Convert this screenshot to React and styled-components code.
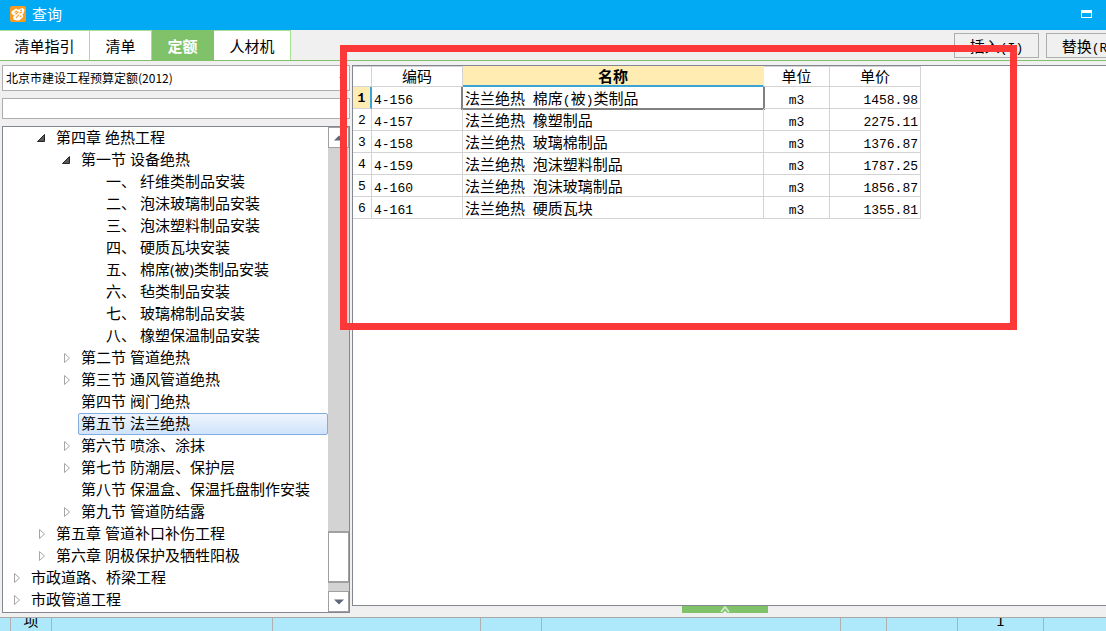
import React, { useState } from 'react';
import styled, { createGlobalStyle, css } from 'styled-components';

const GlobalStyle = createGlobalStyle`
* {
  box-sizing: border-box;
}
body {
  margin: 0;
  overflow: hidden;
  background: #f0f0f0;
}
button, input, select {
  margin: 0;
  padding: 0;
  font: inherit;
  color: inherit;
  border-radius: 0;
}
`
const Window = styled.div`
display: flex;
flex-direction: column;
height: 100vh;
overflow: hidden;
color: #000;
font-family: 'Noto Sans CJK SC', sans-serif;
font-size: 15px;
line-height: 22px;
`
const TitleBar = styled.header`
display: flex;
align-items: center;
gap: 6px;
height: 30px;
padding: 0 14px 2px 10px;
background: #02a9f3;
color: #fff;
`
const Title = styled.h1`
flex: 1;
margin: 0;
font-size: 15px;
font-weight: 400;
`
const MinimizeButton = styled.button`
width: 11px;
height: 8px;
border: 1px solid #fff;
border-top-width: 3px;
background: none;
`
const TopBar = styled.div`
display: flex;
justify-content: space-between;
height: 31px;
overflow: hidden;
border-bottom: 1px solid #7fc269;
`
const Tabs = styled.nav`
display: flex;
`
const Tab = styled.button`
width: ${(props) => props.$width}px;
border: 0 solid #a9df92;
border-width: 1px 1px 0 0;
background: #fff;
line-height: 28px;
${(props) => props.$active && css`
  border-color: #7fc269;
  background: #7fc269;
  color: #fff;
  font-weight: 700;
`}
`
const Actions = styled.div`
display: flex;
gap: 7px;
padding-top: 3px;
margin-right: -25px;
`
const ActionButton = styled.button`
width: 85px;
height: 25px;
border: 1px solid #adadad;
background: #f0f0f0;
`
const Latin = styled.span`
font-family: 'Liberation Mono', monospace;
font-size: 13px;
line-height: 1;
white-space: pre;
`
const Body = styled.main`
display: flex;
flex: 1;
gap: 2px;
min-height: 0;
padding: 4px 0 4px 2px;
`
const SidePanel = styled.aside`
display: flex;
flex-direction: column;
flex: 0 0 348px;
gap: 7px;
`
const SelectBox = styled.div`
display: flex;
align-items: center;
height: 26px;
padding-right: 4px;
border: 1px solid #adadad;
background: #fff;
`
const Select = styled.select`
flex: 1;
height: 24px;
padding-left: 3px;
border: 0;
appearance: none;
background: none;
font-size: 12px;
outline: none;
`
const SearchInput = styled.input`
height: 21px;
padding: 0 3px;
border: 1px solid #adadad;
background: #fff;
font-size: 12px;
outline: none;
`
const TreeBox = styled.div`
display: flex;
flex: 1;
min-height: 0;
border: 1px solid #828790;
background: #fff;
`
const Tree = styled.ul`
flex: 1;
margin: 0;
padding: 0;
overflow: hidden;
list-style: none;
font-family: 'Noto Sans', 'Noto Sans CJK SC', sans-serif;
`
const TreeRow = styled.li`
display: flex;
height: 22px;
padding-left: ${(props) => props.$level * 25}px;
`
const Toggle = styled.span`
display: flex;
flex: 0 0 25px;
align-items: center;
justify-content: center;
padding-left: 2px;
`
const TreeLabel = styled.span`
flex: 1;
padding: 0 2px;
border: 1px solid transparent;
border-radius: 2px;
line-height: 18px;
white-space: nowrap;
${(props) => props.$selected && css`
  border-color: #84acdd;
  background: linear-gradient(#eff5fd, #cfe3fb);
`}
`
const ScrollBar = styled.div`
display: flex;
flex-direction: column;
flex: 0 0 21px;
background: #d3d3d3;
`
const ScrollButton = styled.button`
display: flex;
align-items: center;
justify-content: center;
height: 21px;
border: 1px solid #a0a0a0;
background: #fff;
`
const ScrollTrack = styled.div`
display: flex;
flex: 1;
flex-direction: column;
justify-content: flex-end;
padding-bottom: 8px;
`
const ScrollThumb = styled.div`
height: 52px;
border: 1px solid #a0a0a0;
border-width: 2px 1px;
background: #fff;
`
const MainPanel = styled.section`
display: flex;
flex: 1;
flex-direction: column;
min-width: 0;
`
const GridBox = styled.div`
flex: 1;
min-height: 0;
border: 1px solid #828790;
border-right: 0;
background: #fff;
`
const Grid = styled.table`
width: 568px;
table-layout: fixed;
border-collapse: separate;
border-spacing: 0;
`
const Col = styled.col`
width: ${(props) => props.$width}px;
`
const HeadCell = styled.th`
height: 21px;
padding: 0 0 2px;
border: 1px solid #d3d3d3;
border-left: 0;
font-weight: 400;
line-height: 16px;
${(props) => props.$active && css`
  padding-bottom: 1px;
  border-color: #ffecb3;
  border-bottom: 2px solid #39a5d6;
  background: #ffecb3;
  font-weight: 700;
`}
`
const RowNumber = styled.th`
height: 22px;
padding: 2px 0 0;
border: 0 solid #d3d3d3;
border-width: 0 1px 1px 0;
font-family: 'Liberation Mono', monospace;
font-size: 13px;
font-weight: 400;
line-height: 18px;
${(props) => props.$active && css`
  border-right: 2px solid #39a5d6;
  background: #ffecb3;
  font-weight: 700;
`}
`
const Cell = styled.td`
position: relative;
height: 22px;
padding: 0 2px;
border: 0 solid #d3d3d3;
border-width: 0 1px 1px 0;
line-height: 20px;
text-align: ${(props) => props.$align || 'left'};
white-space: nowrap;
${(props) => props.$focused && css`
  &::after {
    content: '';
    position: absolute;
    inset: 0 -2px -2px -2px;
    border: 2px solid #808080;
    border-top: 0;
  }
`}
`
const HandleRow = styled.div`
display: flex;
justify-content: center;
padding-right: 8px;
`
const Handle = styled.button`
display: flex;
justify-content: center;
width: 86px;
height: 7px;
overflow: hidden;
border: 0;
background: #7fc269;
`
const Footer = styled.footer`
display: flex;
height: 14px;
border-top: 1px solid #a8a8a8;
background: #ade8fb;
`
const FooterCell = styled.div`
display: flex;
flex: 0 0 ${(props) => props.$width}px;
align-items: flex-end;
justify-content: center;
overflow: hidden;
border-right: 1px solid #b0b0b0;
`
const Annotation = styled.div`
position: absolute;
top: 45px;
left: 340px;
width: 677px;
height: 285px;
border: 7px solid #fd3838;
pointer-events: none;
`

const tabs = [
  { name: '清单指引', width: 90 },
  { name: '清单', width: 62 },
  { name: '定额', width: 62 },
  { name: '人材机', width: 77 },
];

const tree = [
  { level: 1, state: 'open', name: '第四章 绝热工程' },
  { level: 2, state: 'open', name: '第一节 设备绝热' },
  { level: 3, name: '一、 纤维类制品安装' },
  { level: 3, name: '二、 泡沫玻璃制品安装' },
  { level: 3, name: '三、 泡沫塑料制品安装' },
  { level: 3, name: '四、 硬质瓦块安装' },
  { level: 3, name: '五、 棉席(被)类制品安装' },
  { level: 3, name: '六、 毡类制品安装' },
  { level: 3, name: '七、 玻璃棉制品安装' },
  { level: 3, name: '八、 橡塑保温制品安装' },
  { level: 2, state: 'closed', name: '第二节 管道绝热' },
  { level: 2, state: 'closed', name: '第三节 通风管道绝热' },
  { level: 2, name: '第四节 阀门绝热' },
  { level: 2, name: '第五节 法兰绝热' },
  { level: 2, state: 'closed', name: '第六节 喷涂、涂抹' },
  { level: 2, state: 'closed', name: '第七节 防潮层、保护层' },
  { level: 2, name: '第八节 保温盒、保温托盘制作安装' },
  { level: 2, state: 'closed', name: '第九节 管道防结露' },
  { level: 1, state: 'closed', name: '第五章 管道补口补伤工程' },
  { level: 1, state: 'closed', name: '第六章 阴极保护及牺牲阳极' },
  { level: 0, state: 'closed', name: '市政道路、桥梁工程' },
  { level: 0, state: 'closed', name: '市政管道工程' },
];

const rows = [
  { code: '4-156', name: '法兰绝热 棉席(被)类制品', unit: 'm3', price: '1458.98' },
  { code: '4-157', name: '法兰绝热 橡塑制品', unit: 'm3', price: '2275.11' },
  { code: '4-158', name: '法兰绝热 玻璃棉制品', unit: 'm3', price: '1376.87' },
  { code: '4-159', name: '法兰绝热 泡沫塑料制品', unit: 'm3', price: '1787.25' },
  { code: '4-160', name: '法兰绝热 泡沫玻璃制品', unit: 'm3', price: '1856.87' },
  { code: '4-161', name: '法兰绝热 硬质瓦块', unit: 'm3', price: '1355.81' },
];

const footerCells = [
  { width: 11 },
  { width: 41, text: '项' },
  { width: 221 },
  { width: 208 },
  { width: 61 },
  { width: 299 },
  { width: 46 },
  { width: 71 },
  { width: 86, text: '1' },
];

// Half-width characters get the narrow monospace face, Chinese keeps the default one
const Mixed = ({ children }) =>
  children.split(/([\x20-\x7e]+)/).map((part, i) => (
    i % 2 ? <Latin key={i}>{part}</Latin> : part
  ));

const Logo = () => (
  <svg width="16" height="16" viewBox="0 0 16 16" aria-hidden="true">
    <rect width="16" height="16" rx="2" fill="#fa9a1e" />
    <path d="M1.5 5.5L6 2.5l2 1.2 4.5-1.7 2 1.6-.6 3.2-1.4 1.6.8 2.4-3.6 3.4-3.2.4-3-1.2-.4-2.4 1.6-1.6-1.8-.4-1.4-1.6z" fill="#fff" />
    <path d="M4.5 6.5L7 5M10 4.5l2-.6M5.5 8.5l3-3M9.5 7.5l2.3-1.8M6 12l3-3.4M9.8 11.2l1.4-1.6" stroke="#fa9a1e" strokeWidth="1.1" fill="none" />
  </svg>
);

const TreeArrow = ({ state }) => (
  <svg width="10" height="12" viewBox="0 0 10 12" aria-hidden="true">
    {state === 'open'
      ? <path d="M7.5 2.5v7h-7z" fill="#595959" stroke="#262626" />
      : <path d="M2.5 1.5v9l5-4.5z" fill="#fff" stroke="#a6a6a6" />}
  </svg>
);

const Arrow = ({ up }) => (
  <svg width="10" height="6" viewBox="0 0 10 6" aria-hidden="true">
    <path d={up ? 'M0 5.5L5 0.5L10 5.5z' : 'M0 0.5L5 5.5L10 0.5z'} fill="#606778" />
  </svg>
);

export default function App() {
  const [activeTab, setActiveTab] = useState('定额');
  const [selected, setSelected] = useState('第五节 法兰绝热');

  return (
    <Window>
      <GlobalStyle />
      <TitleBar>
        <Logo />
        <Title>查询</Title>
        <MinimizeButton aria-label="最小化" />
      </TitleBar>
      <TopBar>
        <Tabs>
          {tabs.map((tab) => (
            <Tab
              key={tab.name}
              $width={tab.width}
              $active={tab.name === activeTab}
              onClick={() => setActiveTab(tab.name)}
            >
              {tab.name}
            </Tab>
          ))}
        </Tabs>
        <Actions>
          <ActionButton><Mixed>插入(I)</Mixed></ActionButton>
          <ActionButton><Mixed>替换(R)</Mixed></ActionButton>
        </Actions>
      </TopBar>
      <Body>
        <SidePanel>
          <SelectBox>
            <Select aria-label="定额库">
              <option>北京市建设工程预算定额(2012)</option>
            </Select>
            <svg width="6" height="3" viewBox="0 0 6 3" aria-hidden="true">
              <path d="M0 0h6l-3 3z" fill="#606778" />
            </svg>
          </SelectBox>
          <SearchInput aria-label="搜索" />
          <TreeBox>
            <Tree role="tree">
              {tree.map((node) => (
                <TreeRow
                  key={node.name}
                  role="treeitem"
                  $level={node.level}
                  aria-selected={node.name === selected}
                  onClick={() => setSelected(node.name)}
                >
                  <Toggle>{node.state && <TreeArrow state={node.state} />}</Toggle>
                  <TreeLabel $selected={node.name === selected}>{node.name}</TreeLabel>
                </TreeRow>
              ))}
            </Tree>
            <ScrollBar>
              <ScrollButton aria-label="向上滚动"><Arrow up /></ScrollButton>
              <ScrollTrack><ScrollThumb /></ScrollTrack>
              <ScrollButton aria-label="向下滚动"><Arrow /></ScrollButton>
            </ScrollBar>
          </TreeBox>
        </SidePanel>
        <MainPanel>
          <GridBox>
            <Grid>
              <colgroup>
                <Col $width={19} />
                <Col $width={91} />
                <Col $width={301} />
                <Col $width={66} />
                <Col $width={91} />
              </colgroup>
              <thead>
                <tr>
                  <HeadCell />
                  <HeadCell>编码</HeadCell>
                  <HeadCell $active>名称</HeadCell>
                  <HeadCell>单位</HeadCell>
                  <HeadCell>单价</HeadCell>
                </tr>
              </thead>
              <tbody>
                {rows.map((row, i) => (
                  <tr key={row.code}>
                    <RowNumber $active={i === 0}>{i + 1}</RowNumber>
                    <Cell><Mixed>{row.code}</Mixed></Cell>
                    <Cell $focused={i === 0}><Mixed>{row.name}</Mixed></Cell>
                    <Cell $align="center"><Mixed>{row.unit}</Mixed></Cell>
                    <Cell $align="right"><Mixed>{row.price}</Mixed></Cell>
                  </tr>
                ))}
              </tbody>
            </Grid>
          </GridBox>
          <HandleRow>
            <Handle aria-label="展开">
              <svg width="10" height="7" viewBox="0 0 10 7" aria-hidden="true">
                <path d="M1 6l4-5 4 5" fill="none" stroke="#cfe9c6" strokeWidth="2" />
                <path d="M3 7l2-2 2 2z" fill="#fff" />
              </svg>
            </Handle>
          </HandleRow>
        </MainPanel>
      </Body>
      <Footer>
        {footerCells.map((cell, i) => (
          <FooterCell key={i} $width={cell.width}>{cell.text}</FooterCell>
        ))}
      </Footer>
      <Annotation />
    </Window>
  );
}
